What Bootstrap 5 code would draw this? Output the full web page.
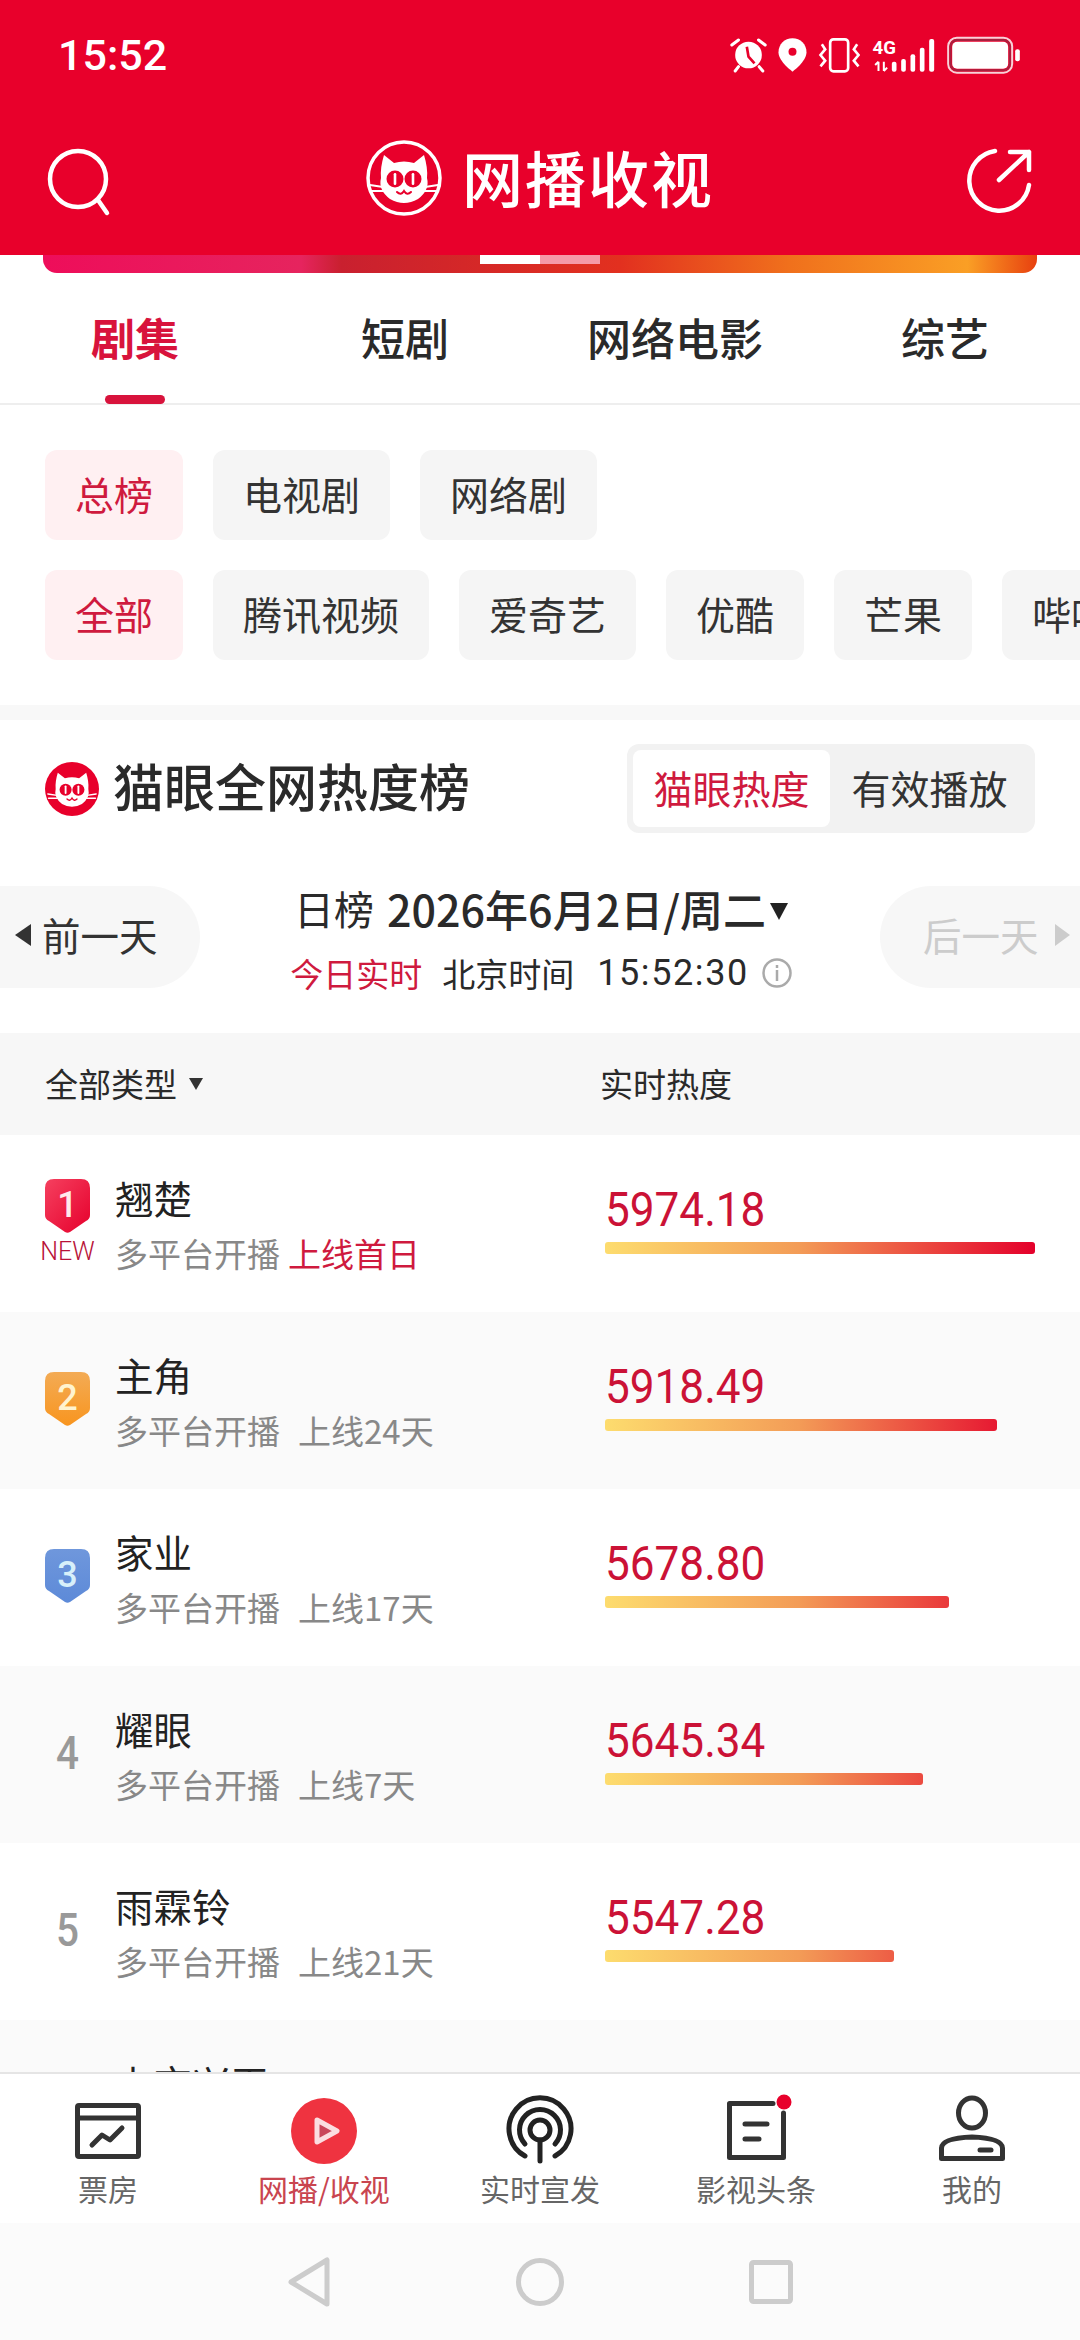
<!DOCTYPE html>
<html lang="zh-CN">

<head>
    <meta charset="UTF-8">
    <meta name="viewport" content="width=device-width, initial-scale=1.0">
    <title>网播收视</title>
    <link href="https://cdn.jsdelivr.net/npm/bootstrap@5.3.0/dist/css/bootstrap.min.css" rel="stylesheet">
    <style>
        html, body {
            height: 2340px;
        }

        body {
            width: 1080px;
            overflow: hidden;
            background: #fff;
            color: #2a2a2a;
            font-family: "Noto Sans CJK SC", "Noto Sans", sans-serif;
        }

        svg {
            display: block;
            overflow: visible;
        }

        .top-red {
            height: 255px;
            background: #e8002b;
            color: #fff;
        }

        .status-row {
            height: 110px;
            padding: 0 58px 0 58px;
            font-family: Roboto, sans-serif;
            font-size: 43px;
            font-weight: 500;
        }

        .title-row {
            height: 136px;
            padding: 0 48px;
        }

        .title-text {
            font-size: 61px;
            font-weight: 500;
            letter-spacing: 2px;
            line-height: 1;
            margin-left: 20px;
            padding-bottom: 4px;
        }

        .title-side {
            margin-top: 6px;
        }

        .banner-strip {
            height: 18px;
            margin: 0 43px;
            border-radius: 0 0 14px 14px;
            background: linear-gradient(90deg, #ee0d5a, #e6245e 26%, #c9202f 30%, #e2301f 58%, #f0701c 75%, #fa9f25 93%, #e8400f);
        }

        .dot-on,
        .dot-off {
            width: 60px;
            height: 9px;
        }

        .dot-on {
            background: #fff;
        }

        .dot-off {
            background: #f59aa8;
        }

        .main-tabs {
            height: 132px;
            border-bottom: 2px solid #eee;
        }

        .main-tab {
            width: 270px;
            height: 130px;
            padding-top: 31px;
            font-size: 44px;
            font-weight: 500;
            line-height: 66px;
            text-align: center;
        }

        .main-tab.is-on {
            color: #d8133c;
            font-weight: 700;
            position: relative;
        }

        .main-tab.is-on::after {
            content: "";
            position: absolute;
            left: 105px;
            bottom: -1px;
            width: 60px;
            height: 9px;
            border-radius: 5px;
            background: #d8133c;
        }

        .filter-box {
            height: 315px;
            padding: 45px 0 0 45px;
            border-bottom: 15px solid #f8f8f8;
        }

        .chip {
            height: 90px;
            padding: 0 30px;
            flex: none;
            border-radius: 12px;
            background: #f5f5f5;
            font-size: 39px;
            line-height: 87px;
            color: #333;
        }

        .chip.is-on {
            background: #fff0f2;
            color: #cf1a3e;
        }

        .chip-line {
            gap: 30px;
        }

        .chip-line + .chip-line {
            margin-top: 30px;
        }

        .section-head {
            height: 89px;
            margin: 24px 45px 53px;
        }

        .section-name {
            font-size: 51px;
            font-weight: 500;
            line-height: 1;
            margin-left: 14px;
            padding-bottom: 7px;
        }

        .seg-box {
            width: 408px;
            height: 89px;
            padding: 6px;
            border-radius: 12px;
            background: #f2f2f2;
            font-size: 39px;
        }

        .seg-on,
        .seg-off {
            height: 77px;
            line-height: 75px;
            text-align: center;
        }

        .seg-on {
            width: 197px;
            border-radius: 8px;
            background: #fff;
            color: #cf1a3e;
        }

        .seg-off {
            flex: 1;
            color: #333;
        }

        .date-row {
            height: 102px;
        }

        .day-pill {
            width: 200px;
            height: 102px;
            padding-bottom: 4px;
            flex: none;
            background: #f7f7f7;
            font-size: 38.5px;
        }

        .day-pill.prev {
            border-radius: 0 51px 51px 0;
            padding-left: 15px;
            color: #333;
        }

        .day-pill.prev svg {
            margin-right: 11px;
        }

        .day-pill.next {
            border-radius: 51px 0 0 51px;
            padding-left: 43px;
            color: #ccc;
        }

        .date-mid {
            flex: 1;
            padding-left: 2px;
        }

        .date-line {
            height: 50px;
            margin-top: -3px;
            font-size: 40px;
            line-height: 50px;
        }

        .date-value {
            font-size: 43px;
            font-weight: 500;
            margin-left: 13px;
        }

        .date-arrow {
            margin: 6px 0 0 4px;
        }

        .live-line {
            height: 50px;
            margin-top: 15px;
            font-size: 33px;
            line-height: 50px;
        }

        .live-red {
            color: #cf1a3e;
            margin-right: 20px;
        }

        .live-time {
            font-family: Roboto, sans-serif;
            font-size: 36px;
            letter-spacing: 1.6px;
            margin: 0 13px 0 23px;
        }

        .list-head {
            height: 102px;
            margin-top: 45px;
            padding-left: 45px;
            background: #f7f7f7;
            font-size: 33px;
        }

        .head-type {
            width: 555px;
        }

        .head-type svg {
            margin-left: 12px;
        }

        .rank-row {
            height: 177px;
            padding-left: 45px;
        }

        .rank-row.is-alt {
            background: #fafafa;
        }

        .rank-col {
            width: 70px;
            padding-bottom: 4px;
            flex: none;
        }

        .rank-num {
            width: 45px;
            text-align: center;
            font-family: Roboto, sans-serif;
            font-size: 46px;
            font-weight: 500;
            line-height: 1;
            color: #999;
            transform: scaleX(.88);
        }

        .rank-new {
            width: 55px;
            margin: 7px 0 0 -5px;
            font-family: Roboto, sans-serif;
            font-size: 25px;
            font-weight: 300;
            line-height: 24px;
            text-align: center;
            color: #b81238;
        }

        .name-col {
            width: 490px;
            flex: none;
        }

        .show-name {
            font-size: 38.5px;
            line-height: 50px;
            color: #222;
        }

        .show-sub {
            margin-top: 8px;
            font-size: 33px;
            line-height: 46px;
            color: #888;
        }

        .sub-first {
            margin-left: 8px;
            color: #cf1a3e;
        }

        .sub-days {
            margin-left: 18px;
        }

        .heat-col {
            flex: 1;
            padding-bottom: 12px;
        }

        .heat-val {
            font-family: Roboto, sans-serif;
            font-size: 49px;
            line-height: 56px;
            color: #cb1236;
            transform: scaleX(.9);
            transform-origin: left center;
        }

        .heat-bar {
            height: 12px;
            margin-top: 4px;
            border-radius: 3px;
            background: linear-gradient(90deg, #fddc6e, #f39c57 45%, #e4002b) left / 430px 100% no-repeat;
        }

        .badge-num {
            font-family: Roboto, sans-serif;
            font-size: 36px;
            font-weight: 500;
        }

        .tab-bar {
            height: 151px;
            border-top: 2px solid #e5e5e5;
            background: #fff;
        }

        .tab-item {
            width: 216px;
            padding-top: 24px;
            font-size: 30px;
            line-height: 40px;
            color: #666;
        }

        .tab-item.is-on {
            color: #c9454f;
        }

        .tab-label {
            margin-top: 4px;
        }

        .sys-bar {
            height: 117px;
            background: #fbfbfb;
        }

        .sys-cell {
            width: 231px;
        }
    </style>
</head>

<body class="d-flex flex-column">
    <svg width="0" height="0" class="position-absolute">
        <symbol id="cat-face" viewBox="0 0 76 76">
            <path fill="#fff" d="M18 15 L28 23 Q38 20 48 23 L58 15 Q62 28 61 38 Q64 50 52 59 Q38 67 24 59 Q12 50 15 38 Q14 28 18 15Z" />
            <circle cx="29" cy="39" r="8.5" fill="#e8002b" />
            <circle cx="47" cy="39" r="8.5" fill="#e8002b" />
            <rect x="27.7" y="33" width="2.6" height="12" rx="1.3" fill="#fff" />
            <rect x="45.7" y="33" width="2.6" height="12" rx="1.3" fill="#fff" />
            <path fill="none" stroke="#e8002b" stroke-width="2" stroke-linecap="round" d="M31 52 Q35 56 38 51 Q41 56 45 52" />
            <path fill="none" stroke="#fff" stroke-width="2" stroke-linecap="round" d="M4 45 L17 47 M5 51 L18 51 M72 45 L59 47 M71 51 L58 51" />
        </symbol>
    </svg>

    <!-- header -->
    <div class="top-red flex-shrink-0">
        <div class="status-row d-flex align-items-center justify-content-between">
            <span>15:52</span>
            <svg class="me-n1" width="292" height="40" viewBox="145 70 875 120" fill="#fff">
                <circle cx="200" cy="130" r="40" />
                <path d="M195 105 L200 135 L218 155" fill="none" stroke="#e8002b" stroke-width="8" />
                <path d="M150 100 L170 85 M250 100 L230 85 M160 178 L170 165 M243 178 L232 165" stroke="#fff" stroke-width="9" stroke-linecap="round" />
                <path d="M332 80 c-24 0 -42 18 -42 42 c0 28 42 58 42 58 s42 -30 42 -58 c0 -24 -18 -42 -42 -42z" />
                <circle cx="332" cy="120" r="12" fill="#e8002b" />
                <rect x="445" y="83" width="54" height="96" rx="10" fill="none" stroke="#fff" stroke-width="8" />
                <path d="M420 98 L430 113 L416 130 L430 147 L416 164 M526 98 L516 113 L530 130 L516 147 L530 164" fill="none" stroke="#fff" stroke-width="8" />
                <text x="572" y="127" font-family="Roboto, sans-serif" font-weight="700" font-size="56">4G</text>
                <path d="M590 150 V178 M580 160 L590 150 M606 150 V178 M616 168 L606 178" fill="none" stroke="#fff" stroke-width="6" />
                <rect x="630" y="150" width="14" height="30" rx="6" />
                <rect x="658" y="142" width="14" height="38" rx="6" />
                <rect x="686" y="128" width="14" height="52" rx="6" />
                <rect x="714" y="108" width="14" height="72" rx="6" />
                <rect x="742" y="82" width="15" height="98" rx="6" />
                <rect x="799" y="78" width="192" height="105" rx="26" fill="none" stroke="#f7d3da" stroke-width="6" />
                <rect x="806" y="85" width="178" height="91" rx="20" fill="none" stroke="#a8203f" stroke-width="6" />
                <rect x="811" y="90" width="168" height="81" rx="15" />
                <rect x="1000" y="113" width="14" height="36" rx="6" />
            </svg>
        </div>
        <div class="title-row d-flex align-items-center justify-content-between">
            <svg class="title-side" width="62" height="68" viewBox="48 146 62 68" fill="none" stroke="#fff" stroke-width="4.5" stroke-linecap="round">
                <circle cx="78" cy="178" r="28" />
                <path d="M98 199 L107 212" />
            </svg>
            <div class="d-flex align-items-center">
                <svg width="76" height="76" viewBox="0 0 76 76">
                    <circle cx="38" cy="38" r="36" fill="none" stroke="#fff" stroke-width="3.5" />
                    <use href="#cat-face" width="76" height="76" />
                </svg>
                <span class="title-text">网播收视</span>
            </div>
            <svg class="title-side" width="62" height="68" viewBox="968 150 62 68" fill="none" stroke="#fff" stroke-width="4.5" stroke-linecap="round" stroke-linejoin="round">
                <path d="M993 154 A30 30 0 1 0 1027 188" />
                <path d="M997 183 L1027 155 M1008 155 H1027 V173" />
            </svg>
        </div>
    </div>

    <div class="banner-strip flex-shrink-0 d-flex justify-content-center">
        <div class="dot-on"></div>
        <div class="dot-off"></div>
    </div>

    <!-- category tabs -->
    <div class="main-tabs d-flex flex-shrink-0">
        <div class="main-tab is-on">剧集</div>
        <div class="main-tab">短剧</div>
        <div class="main-tab">网络电影</div>
        <div class="main-tab">综艺</div>
    </div>

    <div class="flex-grow-1 overflow-hidden">
        <div class="filter-box overflow-hidden">
            <div class="d-flex chip-line">
                <div class="chip is-on">总榜</div>
                <div class="chip">电视剧</div>
                <div class="chip">网络剧</div>
            </div>
            <div class="d-flex chip-line">
                <div class="chip is-on">全部</div>
                <div class="chip">腾讯视频</div>
                <div class="chip">爱奇艺</div>
                <div class="chip">优酷</div>
                <div class="chip">芒果</div>
                <div class="chip">哔哩哔哩</div>
            </div>
        </div>

        <div class="section-head d-flex align-items-center justify-content-between">
            <div class="d-flex align-items-center">
                <svg width="54" height="54" viewBox="0 0 76 76">
                    <circle cx="38" cy="38" r="38" fill="#e8002b" />
                    <use href="#cat-face" width="76" height="76" />
                </svg>
                <span class="section-name">猫眼全网热度榜</span>
            </div>
            <div class="seg-box d-flex">
                <div class="seg-on">猫眼热度</div>
                <div class="seg-off">有效播放</div>
            </div>
        </div>

        <div class="date-row d-flex">
            <div class="day-pill prev d-flex align-items-center">
                <svg width="16" height="22" viewBox="0 0 16 22"><path d="M16 0 V22 L0 11Z" fill="#333" /></svg>
                <span>前一天</span>
            </div>
            <div class="date-mid d-flex flex-column align-items-center">
                <div class="date-line d-flex align-items-center">
                    <span>日榜</span><span class="date-value">2026年6月2日/周二</span>
                    <svg class="date-arrow" width="18" height="17" viewBox="0 0 18 17"><path d="M0 0 H18 L9 17Z" fill="#222" /></svg>
                </div>
                <div class="live-line d-flex align-items-center">
                    <span class="live-red">今日实时</span><span>北京时间</span><span class="live-time">15:52:30</span>
                    <svg width="30" height="30" viewBox="0 0 30 30" fill="none" stroke="#aaa" stroke-width="2.5">
                        <circle cx="15" cy="15" r="13.5" />
                        <path d="M15 12 V23 M15 7 V10" />
                    </svg>
                </div>
            </div>
            <div class="day-pill next d-flex align-items-center">
                <span>后一天</span>
                <svg width="15" height="22" viewBox="0 0 15 22" class="ms-3"><path d="M0 0 V22 L15 11Z" fill="#ccc" /></svg>
            </div>
        </div>

        <div class="list-head d-flex align-items-center">
            <div class="head-type d-flex align-items-center">
                <span>全部类型</span>
                <svg width="14" height="12" viewBox="0 0 14 12"><path d="M0 0 H14 L7 12Z" fill="#333" /></svg>
            </div>
            <div>实时热度</div>
        </div>

        <div class="rank-row d-flex align-items-center">
            <div class="rank-col">
                <svg width="45" height="54" viewBox="0 0 45 54">
                    <defs><linearGradient id="badge-red" x1="0" y1="0" x2="1" y2="1"><stop offset="0" stop-color="#f5405f" /><stop offset="1" stop-color="#e6002c" /></linearGradient></defs>
                    <path fill="url(#badge-red)" d="M9 0 H36 Q45 0 45 9 V36 Q45 40 41 42 L25 53 Q22.5 54.5 20 53 L4 42 Q0 40 0 36 V9 Q0 0 9 0Z" />
                    <text class="badge-num" x="22.5" y="38" text-anchor="middle" fill="#ffe9ec">1</text>
                </svg>
                <div class="rank-new">NEW</div>
            </div>
            <div class="name-col">
                <div class="show-name">翘楚</div>
                <div class="show-sub">多平台开播<span class="sub-first">上线首日</span></div>
            </div>
            <div class="heat-col">
                <div class="heat-val">5974.18</div>
                <div class="heat-bar" style="width: 430px"></div>
            </div>
        </div>

        <div class="rank-row is-alt d-flex align-items-center">
            <div class="rank-col">
                <svg width="45" height="54" viewBox="0 0 45 54">
                    <defs><linearGradient id="badge-org" x1="0" y1="0" x2="0" y2="1"><stop offset="0" stop-color="#f3ab55" /><stop offset="1" stop-color="#f8951f" /></linearGradient></defs>
                    <path fill="url(#badge-org)" d="M9 0 H36 Q45 0 45 9 V36 Q45 40 41 42 L25 53 Q22.5 54.5 20 53 L4 42 Q0 40 0 36 V9 Q0 0 9 0Z" />
                    <text class="badge-num" x="22.5" y="38" text-anchor="middle" fill="#fff3cf">2</text>
                </svg>
            </div>
            <div class="name-col">
                <div class="show-name">主角</div>
                <div class="show-sub">多平台开播<span class="sub-days">上线24天</span></div>
            </div>
            <div class="heat-col">
                <div class="heat-val">5918.49</div>
                <div class="heat-bar" style="width: 392px"></div>
            </div>
        </div>

        <div class="rank-row d-flex align-items-center">
            <div class="rank-col">
                <svg width="45" height="54" viewBox="0 0 45 54">
                    <defs><linearGradient id="badge-blu" x1="0" y1="0" x2="0" y2="1"><stop offset="0" stop-color="#6f97dc" /><stop offset="1" stop-color="#5d8ad8" /></linearGradient></defs>
                    <path fill="url(#badge-blu)" d="M9 0 H36 Q45 0 45 9 V36 Q45 40 41 42 L25 53 Q22.5 54.5 20 53 L4 42 Q0 40 0 36 V9 Q0 0 9 0Z" />
                    <text class="badge-num" x="22.5" y="38" text-anchor="middle" fill="#d8f0fa">3</text>
                </svg>
            </div>
            <div class="name-col">
                <div class="show-name">家业</div>
                <div class="show-sub">多平台开播<span class="sub-days">上线17天</span></div>
            </div>
            <div class="heat-col">
                <div class="heat-val">5678.80</div>
                <div class="heat-bar" style="width: 344px"></div>
            </div>
        </div>

        <div class="rank-row is-alt d-flex align-items-center">
            <div class="rank-col"><div class="rank-num">4</div></div>
            <div class="name-col">
                <div class="show-name">耀眼</div>
                <div class="show-sub">多平台开播<span class="sub-days">上线7天</span></div>
            </div>
            <div class="heat-col">
                <div class="heat-val">5645.34</div>
                <div class="heat-bar" style="width: 318px"></div>
            </div>
        </div>

        <div class="rank-row d-flex align-items-center">
            <div class="rank-col"><div class="rank-num">5</div></div>
            <div class="name-col">
                <div class="show-name">雨霖铃</div>
                <div class="show-sub">多平台开播<span class="sub-days">上线21天</span></div>
            </div>
            <div class="heat-col">
                <div class="heat-val">5547.28</div>
                <div class="heat-bar" style="width: 289px"></div>
            </div>
        </div>

        <div class="rank-row is-alt d-flex align-items-center">
            <div class="rank-col"><div class="rank-num">6</div></div>
            <div class="name-col">
                <div class="show-name">上京兴玉</div>
                <div class="show-sub">多平台开播</div>
            </div>
        </div>
    </div>

    <!-- bottom tabs -->
    <div class="tab-bar d-flex flex-shrink-0">
        <div class="tab-item d-flex flex-column align-items-center">
            <svg width="80" height="66" viewBox="0 0 80 66" fill="none" stroke="#333" stroke-width="5" stroke-linecap="round" stroke-linejoin="round">
                <rect x="9.5" y="7.5" width="61" height="51" rx="1.5" />
                <path d="M9.5 20 H70.5" />
                <path d="M24 47 L34 37 L42 42 L54 30" />
            </svg>
            <div class="tab-label">票房</div>
        </div>
        <div class="tab-item is-on d-flex flex-column align-items-center">
            <svg width="80" height="66" viewBox="0 0 80 66">
                <circle cx="40" cy="33" r="33" fill="#ef3340" />
                <path d="M33 22 L53 33 L33 44Z" fill="#c9465a" stroke="#fbdde0" stroke-width="5" stroke-linejoin="round" />
            </svg>
            <div class="tab-label">网播/收视</div>
        </div>
        <div class="tab-item d-flex flex-column align-items-center">
            <svg width="80" height="66" viewBox="0 0 80 66" fill="none" stroke="#222" stroke-width="5" stroke-linecap="round">
                <path d="M25 58 A31 31 0 1 1 55 58" />
                <path d="M25 46 A20.5 20.5 0 1 1 55 46" />
                <circle cx="40" cy="32" r="10" />
                <path d="M40 42 V63" />
            </svg>
            <div class="tab-label">实时宣发</div>
        </div>
        <div class="tab-item d-flex flex-column align-items-center">
            <svg width="80" height="66" viewBox="0 0 80 66" fill="none" stroke="#333" stroke-width="5" stroke-linecap="round" stroke-linejoin="round">
                <path d="M57 5.5 H13.5 V59.5 H67.5 V15" />
                <path d="M29 26 H51 M29 41 H43" />
                <circle cx="68" cy="4" r="7.5" fill="#e8002b" stroke="none" />
            </svg>
            <div class="tab-label">影视头条</div>
        </div>
        <div class="tab-item d-flex flex-column align-items-center">
            <svg width="80" height="66" viewBox="0 0 80 66" fill="none" stroke="#333" stroke-width="5" stroke-linecap="round" stroke-linejoin="round">
                <ellipse cx="40" cy="15" rx="13.5" ry="15" />
                <path d="M9.5 60.5 V50 Q10 40 40 39 Q70 40 70.5 50 V60.5Z" />
                <path d="M48 52 H59" />
            </svg>
            <div class="tab-label">我的</div>
        </div>
    </div>

    <!-- android nav keys -->
    <div class="sys-bar d-flex flex-shrink-0 align-items-center justify-content-center">
        <div class="sys-cell d-flex justify-content-center">
            <svg width="42" height="50" viewBox="0 0 42 50" fill="none" stroke="#ccc" stroke-width="5" stroke-linejoin="round"><path d="M39 3 V47 L3 25Z" /></svg>
        </div>
        <div class="sys-cell d-flex justify-content-center">
            <svg width="48" height="48" viewBox="0 0 48 48" fill="none" stroke="#ccc" stroke-width="5"><circle cx="24" cy="24" r="21.5" /></svg>
        </div>
        <div class="sys-cell d-flex justify-content-center">
            <svg width="44" height="44" viewBox="0 0 44 44" fill="none" stroke="#ccc" stroke-width="5"><rect x="2.5" y="2.5" width="39" height="39" rx="2" /></svg>
        </div>
    </div>

    <script src="https://cdn.jsdelivr.net/npm/bootstrap@5.3.0/dist/js/bootstrap.bundle.min.js"></script>
</body>

</html>
